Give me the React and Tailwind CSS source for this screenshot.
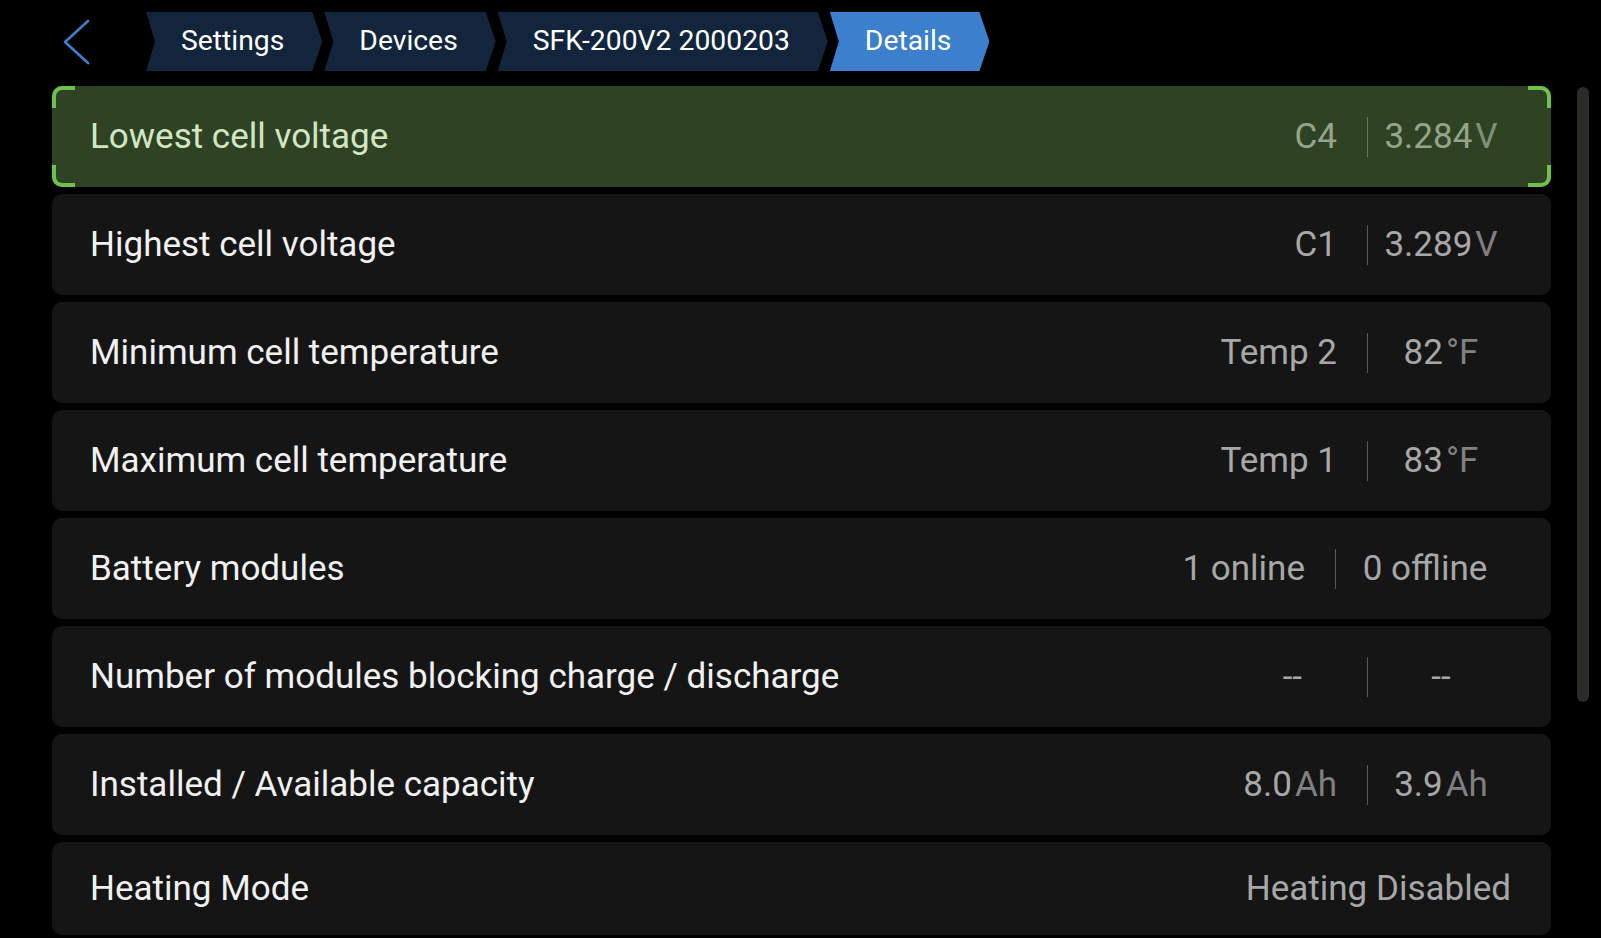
import React from "react";

const crumbs = [
  {label: "Settings", active: false},
  {label: "Devices", active: false},
  {label: "SFK-200V2 2000203", active: false},
  {label: "Details", active: true},
];

// left/right hold [number, unit]; unit is drawn a bit darker
const rows = [
  {label: "Lowest cell voltage", left: ["C4"], right: ["3.284", "V"], highlight: true},
  {label: "Highest cell voltage", left: ["C1"], right: ["3.289", "V"]},
  {label: "Minimum cell temperature", left: ["Temp 2"], right: ["82", "°F"]},
  {label: "Maximum cell temperature", left: ["Temp 1"], right: ["83", "°F"]},
  {label: "Battery modules", left: ["1 online"], right: ["0 offline"], rightBox: "w-[178px]"},
  {label: "Number of modules blocking charge / discharge", left: ["--"], right: ["--"], leftGap: "mr-[65px]"},
  {label: "Installed / Available capacity", left: ["8.0", "Ah"], right: ["3.9", "Ah"]},
  {label: "Heating Mode", single: "Heating Disabled", last: true},
];

function Value({parts, hl})
{
  const [num, unit] = parts;
  return (
    <span className="whitespace-nowrap">
      <span className={hl ? "text-[#94a58c]" : "text-[#a7a7a7]"}>{num}</span>
      {unit && (
        <span className={hl ? "ml-[3px] text-[#7f9077]" : "ml-[3px] text-[#808080]"}>{unit}</span>
      )}
    </span>
  );
}

function Bracket({pos})
{
  const cls = {
    tl: "top-0 left-0 border-l-[4px] border-t-[4px] rounded-tl-[10px]",
    tr: "top-0 right-0 border-r-[4px] border-t-[4px] rounded-tr-[10px]",
    bl: "bottom-0 left-0 border-l-[4px] border-b-[4px] rounded-bl-[10px]",
    br: "bottom-0 right-0 border-r-[4px] border-b-[4px] rounded-br-[10px]",
  }[pos];
  return <span className={`absolute h-[22px] w-[23px] border-[#6cc24a] ${cls}`} />;
}

function Row({row})
{
  const hl = row.highlight;
  return (
    <div
      className={
        "relative flex items-center justify-between rounded-[10px] pl-[38px] " +
        (hl ? "bg-[#2f4224] " : "bg-[#151515] ") +
        (row.last ? "h-[93px] pr-[40px]" : "h-[101px] pr-[37px]")
      }
    >
      {hl && (
        <>
          <Bracket pos="tl" />
          <Bracket pos="tr" />
          <Bracket pos="bl" />
          <Bracket pos="br" />
        </>
      )}

      <span className={hl ? "text-[#d3e6c4]" : "text-[#f1f1f1]"}>{row.label}</span>

      {row.single ? (
        <span className="text-[#a7a7a7]">{row.single}</span>
      ) : (
        <div className="flex items-center">
          <div className={"text-right " + (row.leftGap || "mr-[30px]")}>
            <Value parts={row.left} hl={hl} />
          </div>
          <div className={"h-[40px] w-px " + (hl ? "bg-[#66775d]" : "bg-[#585858]")} />
          <div className={"text-center " + (row.rightBox || "w-[146px]")}>
            <Value parts={row.right} hl={hl} />
          </div>
        </div>
      )}
    </div>
  );
}

function Crumb({label, active})
{
  return (
    <div
      className={
        "flex h-[59px] items-center pl-[35px] pr-[38px] text-[28.3px] text-white " +
        "[clip-path:polygon(0_0,calc(100%-10px)_0,100%_50%,calc(100%-10px)_100%,0_100%,9px_50%)] " +
        (active ? "bg-[#3b7fcd]" : "bg-[#13253c]")
      }
    >
      {label}
    </div>
  );
}

export default function App()
{
  return (
    <div
      className="h-[938px] w-[1601px] overflow-hidden bg-black"
      style={{fontFamily: "Roboto, 'Noto Sans', sans-serif"}}
    >
      {/* header: back arrow + breadcrumb */}
      <div className="flex items-center pl-[63px] pt-[12px]">
        <svg width="28" height="46" viewBox="0 0 28 46" className="mr-[55px]">
          <polyline
            points="25,2 2,23 25,44"
            fill="none"
            stroke="#3b7fcd"
            strokeWidth="2.6"
            strokeLinecap="round"
            strokeLinejoin="round"
          />
        </svg>
        <div className="flex gap-[2px]">
          {crumbs.map((c) => (
            <Crumb key={c.label} {...c} />
          ))}
        </div>
      </div>

      {/* list + scrollbar */}
      <div className="mt-[15px] flex items-start pl-[52px]">
        <div className="flex w-[1499px] flex-col gap-[7px] text-[35px] leading-none">
          {rows.map((r) => (
            <Row key={r.label} row={r} />
          ))}
        </div>
        <div className="ml-[26px] mt-px h-[615px] w-[12px] rounded-full bg-[#2d2b27]" />
      </div>
    </div>
  );
}
